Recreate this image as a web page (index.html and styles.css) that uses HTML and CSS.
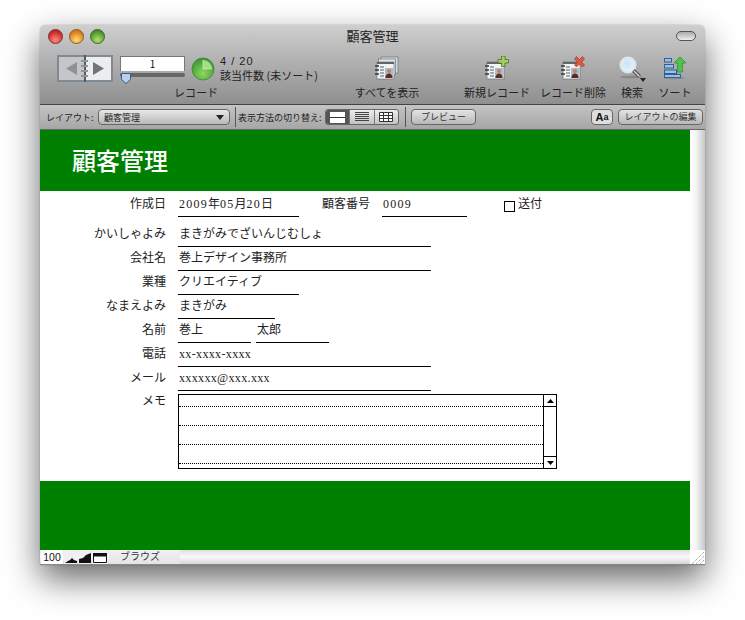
FILE: index.html
```html
<!DOCTYPE html>
<html lang="ja">
<head>
    <meta charset="UTF-8">
    <title>顧客管理</title>
    <link rel="stylesheet" href="styles.css">
</head>
<body>

<svg class="defs" width="0" height="0">
    <defs>
        <radialGradient id="redBall" cx="50%" cy="75%" r="65%">
            <stop offset="0" stop-color="#ff8a80"/><stop offset="1" stop-color="#c81e1e"/>
        </radialGradient>
        <radialGradient id="amberBall" cx="50%" cy="75%" r="65%">
            <stop offset="0" stop-color="#ffe070"/><stop offset="1" stop-color="#d9711a"/>
        </radialGradient>
        <radialGradient id="greenBall" cx="50%" cy="75%" r="65%">
            <stop offset="0" stop-color="#b5e070"/><stop offset="1" stop-color="#3f8f25"/>
        </radialGradient>
        <radialGradient id="pieBall" cx="50%" cy="70%" r="65%">
            <stop offset="0" stop-color="#8fd860"/><stop offset="1" stop-color="#3a9a30"/>
        </radialGradient>
        <radialGradient id="lens" cx="45%" cy="40%" r="60%">
            <stop offset="0" stop-color="#c4e4f8"/><stop offset="1" stop-color="#e9f3f8"/>
        </radialGradient>
        <symbol id="card" viewBox="0 0 20 20">
            <rect x="2" y="2" width="17" height="17" fill="#f1f3f3" stroke="#6c7278" stroke-width=".7"/>
            <rect x="2" y="2" width="17" height="2" fill="#5f666c"/>
            <path d="M0 6h4M0 10h4M0 14h4" stroke="#33383c" stroke-width="1.3"/>
            <path d="M5 7h4M5 10h4M5 13h4M5 16h4" stroke="#8b949b" stroke-width="1.4"/>
            <rect x="10" y="8" width="8" height="10" fill="#a9bccb"/>
            <circle cx="14" cy="11" r="2" fill="#c9805f"/>
            <path d="M10.500 18c0-3 1.500-4.500 3.500-4.500s3.500 1.500 3.500 4.500z" fill="#5b2b20"/>
        </symbol>
    </defs>
</svg>

<div class="window">
    <div class="titlebar">
        <div class="lights">
            <svg width="15" height="15"><circle cx="7.500" cy="7.500" r="7" fill="url(#redBall)" stroke="#7c3a3a"/></svg>
            <svg width="15" height="15"><circle cx="7.500" cy="7.500" r="7" fill="url(#amberBall)" stroke="#86602a"/></svg>
            <svg width="15" height="15"><circle cx="7.500" cy="7.500" r="7" fill="url(#greenBall)" stroke="#3d6b30"/></svg>
        </div>
        <div class="window-title">顧客管理</div>
        <div class="pill"></div>
    </div>

    <div class="toolbar">
        <div class="record-group">
            <div class="record-controls">
                <svg class="book" width="56" height="28" viewBox="0 0 56 28">
                    <rect x="0" y="0" width="56" height="27" fill="#7f8a93"/>
                    <rect x="2" y="2" width="26" height="23" fill="#c4c6c8"/>
                    <rect x="28" y="2" width="26" height="23" fill="#eceded"/>
                    <rect x="27" y="0" width="2" height="27" fill="#4e5a64"/>
                    <path d="M24 6h7M24 11h7M24 16h7M24 21h7" stroke="#555d63" stroke-width="2"/>
                    <path d="M24 6h7M24 11h7M24 16h7M24 21h7" stroke="#e8e8e8" stroke-width=".8"/>
                    <path d="M20 7v13l-11-6.500z" fill="#8f9295"/>
                    <path d="M36 7v13l11-6.500z" fill="#6e747a"/>
                </svg>
                <div class="slider-box">
                    <div class="record-input">1</div>
                    <div class="slider">
                        <svg class="thumb" width="10" height="11" viewBox="0 0 10 11"><path d="M.500.500h9v6l-4.500 4-4.500-4z" fill="#bcd0ea" stroke="#2f5d9c"/></svg>
                    </div>
                </div>
                <svg class="pie" width="24" height="24" viewBox="0 0 24 24">
                    <circle cx="12" cy="12" r="11" fill="url(#pieBall)" stroke="#4b7b45" stroke-width=".8"/>
                    <path d="M12 12V3a9 9 0 0 1 9 9z" fill="#a9dc88"/>
                    <path d="M12 12V3M12 12h9" stroke="#d9efc8" stroke-width=".7"/>
                </svg>
                <div class="record-count">
                    <div class="count-number">4 / 20</div>
                    <div>該当件数 (未ソート)</div>
                </div>
            </div>
            <div class="tool-label">レコード</div>
        </div>

        <div class="tool tool-all">
            <svg class="tool-icon" width="26" height="24" viewBox="0 0 26 24">
                <rect x="7" y="1" width="17" height="16" fill="#d5d9db" stroke="#6c7278" stroke-width=".7"/>
                <rect x="4.500" y="3" width="17" height="16" fill="#e4e7e8" stroke="#6c7278" stroke-width=".7"/>
                <use href="#card" x="1" y="4" width="20" height="20"/>
            </svg>
            <div class="tool-label">すべてを表示</div>
        </div>
        <div class="tool tool-new">
            <svg class="tool-icon" width="24" height="24" viewBox="0 0 24 24">
                <use href="#card" x="0" y="4" width="20" height="20"/>
                <path d="M13 3.500h3.500V0h3.500v3.500h3.500v3.500H20v3.500h-3.500V7H13z" fill="#a4cf5e" stroke="#47722d" stroke-width=".8"/>
            </svg>
            <div class="tool-label">新規レコード</div>
        </div>
        <div class="tool tool-delete">
            <svg class="tool-icon" width="24" height="24" viewBox="0 0 24 24">
                <use href="#card" x="0" y="4" width="20" height="20"/>
                <path d="M13.500 3l2-2.500 3 3 3-3 2 2.500-3 3 3 3-2 2-3-3-3 3-2-2 3-3z" fill="#e2573f" stroke="#8c3226" stroke-width=".6"/>
            </svg>
            <div class="tool-label">レコード削除</div>
        </div>
        <div class="tool tool-find">
            <svg class="tool-icon" width="28" height="26" viewBox="0 0 28 26">
                <ellipse cx="13" cy="21" rx="11" ry="1.500" fill="#777" opacity=".6"/>
                <circle cx="10" cy="9" r="7.500" fill="url(#lens)" stroke="#dfe6ea" stroke-width="2"/>
                <path d="M15.500 14.500l6 6" stroke="#444" stroke-width="3.500"/>
                <path d="M16 15l5.500 5.500" stroke="#ddd" stroke-width="1.500"/>
                <path d="M22 22h6l-3 4z" fill="#222"/>
            </svg>
            <div class="tool-label">検索</div>
        </div>
        <div class="tool tool-sort">
            <svg class="tool-icon" width="24" height="24" viewBox="0 0 24 24">
                <ellipse cx="11" cy="22" rx="11" ry="1.500" fill="#777" opacity=".5"/>
                <g fill="#9dc0e0" stroke="#2f5f95" stroke-width="1">
                    <rect x="1.500" y="2.500" width="7" height="3.500"/>
                    <rect x="1.500" y="8.500" width="9" height="3.500"/>
                    <rect x="1.500" y="14" width="12" height="3.500"/>
                    <rect x="1.500" y="18.500" width="16" height="3"/>
                </g>
                <path d="M17 1l6 6h-3.500v9h-5V7H11z" fill="#4fc24a" stroke="#2f8a33" stroke-width=".7"/>
            </svg>
            <div class="tool-label">ソート</div>
        </div>
    </div>

    <div class="layoutbar">
        <span class="bar-text layout-text">レイアウト:</span>
        <div class="select">
            <span>顧客管理</span>
            <svg width="8" height="5"><path d="M0 0h8l-4 5z" fill="#222"/></svg>
        </div>
        <div class="bar-sep"></div>
        <span class="bar-text view-text">表示方法の切り替え:</span>
        <div class="segments">
            <div class="segment segment-on">
                <svg width="15" height="11"><path d="M0 0h15v11H0z" fill="#fff"/><path d="M0 5.500h15" stroke="#333"/></svg>
            </div>
            <div class="segment">
                <svg width="14" height="10"><path d="M0 .500h14M0 2.500h14M0 4.500h14M0 6.500h14M0 8.500h14" stroke="#444"/></svg>
            </div>
            <div class="segment">
                <svg width="14" height="10"><path d="M.500.500h13v9h-13zM.500 3.500h13M.500 6.500h13M4.500 .500v9M9.500 .500v9" fill="#fff" stroke="#333"/></svg>
            </div>
        </div>
        <div class="bar-sep bar-sep-wide"></div>
        <button class="bar-button preview">プレビュー</button>
        <button class="bar-button font-button">A<sup>a</sup></button>
        <button class="bar-button edit-layout">レイアウトの編集</button>
    </div>

    <div class="body-row">
        <div class="content">
            <div class="green-head">顧客管理</div>
            <div class="form">
                <div class="row row-first">
                    <div class="label">作成日</div>
                    <div class="field w-date"><span class="digits">2009</span>年<span class="digits">05</span>月<span class="digits">20</span>日</div>
                    <div class="label label-number">顧客番号</div>
                    <div class="field w-number"><span class="digits">0009</span></div>
                    <div class="send">
                        <span class="checkbox"></span>送付
                    </div>
                </div>
                <div class="row">
                    <div class="label">かいしゃよみ</div>
                    <div class="field w-long">まきがみでざいんじむしょ</div>
                </div>
                <div class="row">
                    <div class="label">会社名</div>
                    <div class="field w-long">巻上デザイン事務所</div>
                </div>
                <div class="row">
                    <div class="label">業種</div>
                    <div class="field w-date">クリエイティブ</div>
                </div>
                <div class="row">
                    <div class="label">なまえよみ</div>
                    <div class="field w-kana">まきがみ</div>
                </div>
                <div class="row">
                    <div class="label">名前</div>
                    <div class="field w-name">巻上</div>
                    <div class="field w-name name-second">太郎</div>
                </div>
                <div class="row">
                    <div class="label">電話</div>
                    <div class="field w-long latin">xx-xxxx-xxxx</div>
                </div>
                <div class="row">
                    <div class="label">メール</div>
                    <div class="field w-long latin">xxxxxx@xxx.xxx</div>
                </div>
                <div class="memo-row">
                    <div class="label">メモ</div>
                    <div class="memo">
                        <div class="memo-lines">
                            <div class="memo-line"></div>
                            <div class="memo-line"></div>
                            <div class="memo-line"></div>
                            <div class="memo-line"></div>
                        </div>
                        <div class="memo-scroll">
                            <div class="scroll-btn"><svg width="7" height="4"><path d="M3.500 0L7 4H0z"/></svg></div>
                            <div class="scroll-track"></div>
                            <div class="scroll-btn"><svg width="7" height="4"><path d="M0 0h7L3.500 4z"/></svg></div>
                        </div>
                    </div>
                </div>
            </div>
            <div class="green-foot"></div>
        </div>
        <div class="scrollbar"></div>
    </div>

    <div class="statusbar">
        <div class="zoom-value">100</div>
        <div class="status-cell">
            <svg width="12" height="5"><path d="M0 5l3-2 2-1 2-2 2 2 3 1v2z" fill="#111"/></svg>
        </div>
        <div class="status-cell">
            <svg width="12" height="10"><path d="M0 10V6l4-1 3-3 5-2v10z" fill="#111"/></svg>
        </div>
        <div class="status-cell">
            <svg width="14" height="10"><path d="M.500.500h13v9H.500z" fill="#fff" stroke="#111"/><path d="M0 0h14v3.500H0z" fill="#111"/></svg>
        </div>
        <div class="mode">ブラウズ</div>
        <div class="status-rest"></div>
        <svg class="grip" width="15" height="14"><path d="M14 2L2 14M14 6L6 14M14 10l-4 4" stroke="#888" stroke-dasharray="1 1" fill="none"/></svg>
    </div>
</div>

</body>
</html>
```

FILE: styles.css
```css
html {
    height: 100%;
    background: #fff;
}

body {
    margin: 0;
    min-height: 100%;
    padding: 25px 40px 0;
    box-sizing: border-box;
    background: #fff;
    font-family: "Noto Sans CJK JP", "Liberation Sans", sans-serif;
    color: #222;
}

.defs {
    position: absolute;
}

.window {
    width: 665px;
    height: 540px;
    display: flex;
    flex-direction: column;
    border-radius: 6px 6px 0 0;
    box-shadow: 0 14px 34px rgba(0, 0, 0, 0.6), 0 0 1px rgba(0, 0, 0, 0.6);
    background: #fff;
}

/* title bar */
.titlebar {
    height: 22px;
    flex: none;
    display: flex;
    align-items: center;
    position: relative;
    border-radius: 6px 6px 0 0;
    background: linear-gradient(#cfcfcf, #bcbcbc);
}

.lights {
    display: flex;
    gap: 6px;
    padding-left: 8px;
}

.lights svg {
    display: block;
}

.window-title {
    position: absolute;
    left: 0;
    right: 0;
    text-align: center;
    font-size: 13px;
    line-height: 22px;
    color: #222;
}

.pill {
    position: absolute;
    right: 9px;
    top: 6px;
    width: 18px;
    height: 8px;
    border: 1px solid #555;
    border-radius: 5px;
    background: linear-gradient(#aaa, #eee);
}

/* toolbar */
.toolbar {
    height: 58px;
    flex: none;
    display: flex;
    padding-left: 17px;
    box-sizing: border-box;
    background: linear-gradient(#bcbcbc, #8f8f8f);
    border-bottom: 1px solid #444;
}

.tool-label {
    font-size: 11px;
    line-height: 14px;
    color: #222;
    text-align: center;
    white-space: nowrap;
}

.record-group {
    width: 278px;
    flex: none;
}

.record-controls {
    display: flex;
    height: 38px;
    padding-top: 8px;
    box-sizing: border-box;
}

.book {
    display: block;
    flex: none;
}

.slider-box {
    width: 65px;
    margin: 1px 0 0 7px;
    flex: none;
}

.record-input {
    height: 15px;
    background: #fff;
    border: 1px solid #777;
    border-bottom: 0;
    box-sizing: border-box;
    font-size: 10px;
    line-height: 13px;
    text-align: center;
    color: #111;
}

.slider {
    height: 4px;
    margin-top: 2px;
    border-radius: 2px;
    background: #666;
    position: relative;
}

.thumb {
    position: absolute;
    left: 1px;
    top: 0;
}

.pie {
    margin: 2px 0 0 6px;
    flex: none;
}

.record-count {
    margin: -1px 0 0 5px;
    font-size: 11px;
    line-height: 14px;
    color: #222;
    white-space: nowrap;
}

.count-number {
    font-family: "Liberation Sans", sans-serif;
    letter-spacing: 1px;
}

.tool {
    flex: none;
    display: flex;
    flex-direction: column;
    align-items: center;
    justify-content: flex-end;
    height: 52px;
}

.tool-icon {
    display: block;
    margin-bottom: 5px;
}

.tool-all {
    width: 104px;
}

.tool-new {
    width: 76px;
    margin-left: 20px;
}

.tool-delete {
    width: 76px;
}

.tool-find {
    width: 42px;
}

.tool-find .tool-icon {
    margin-bottom: 3px;
}

.tool-sort {
    width: 44px;
}

/* layout bar */
.layoutbar {
    height: 25px;
    flex: none;
    display: flex;
    align-items: center;
    padding-left: 6px;
    box-sizing: border-box;
    background: linear-gradient(#c4c4c4, #a6a6a6);
    border-bottom: 1px solid #666;
}

.bar-text {
    font-size: 9px;
    color: #222;
    white-space: nowrap;
}

.layout-text {
    width: 52px;
}

.view-text {
    width: 85px;
}

.select {
    width: 132px;
    height: 16px;
    box-sizing: border-box;
    display: flex;
    align-items: center;
    justify-content: space-between;
    padding: 0 5px 0 5px;
    font-size: 9px;
    border: 1px solid #666;
    border-radius: 4px;
    background: linear-gradient(#e8e8e8, #b8b8b8);
}

.bar-sep {
    width: 1px;
    height: 20px;
    margin: 0 2px 0 5px;
    background: #555;
}

.bar-sep-wide {
    margin: 0 5px 0 6px;
}

.segments {
    display: flex;
    margin-left: 2px;
    height: 16px;
    width: 74px;
    border: 1px solid #666;
    box-sizing: border-box;
    border-radius: 3px;
    overflow: hidden;
    background: linear-gradient(#eee, #c2c2c2);
}

.segment {
    flex: 1;
    display: flex;
    align-items: center;
    justify-content: center;
    border-right: 1px solid #777;
}

.segment:last-child {
    border-right: 0;
}

.segment-on {
    background: #555;
}

.segment svg {
    display: block;
}

.bar-button {
    height: 16px;
    padding: 0;
    font-family: inherit;
    font-size: 9px;
    line-height: 14px;
    color: #333;
    border: 1px solid #666;
    border-radius: 4px;
    background: linear-gradient(#e4e4e4, #b8b8b8);
}

.preview {
    width: 65px;
}

.font-button {
    width: 22px;
    margin-left: 115px;
    font-family: "Liberation Sans", sans-serif;
    font-size: 11px;
    font-weight: bold;
    color: #111;
    background: #ddd;
}

.font-button sup {
    font-size: 9px;
    line-height: 0;
    vertical-align: 1px;
}

.edit-layout {
    width: 85px;
    margin-left: 5px;
}

/* page */
.body-row {
    flex: 1;
    display: flex;
    min-height: 0;
}

.content {
    width: 650px;
    display: flex;
    flex-direction: column;
}

.green-head {
    height: 61px;
    flex: none;
    background: #008000;
    color: #fff;
    font-size: 24px;
    font-weight: 500;
    line-height: 59px;
    padding-bottom: 2px;
    box-sizing: border-box;
    padding-left: 32px;
}

.green-foot {
    height: 69px;
    flex: none;
    background: #008000;
}

.form {
    flex: 1;
    padding-top: 2px;
    box-sizing: border-box;
    font-family: "Liberation Serif", "Noto Sans CJK JP", serif;
    font-size: 12px;
    color: #222;
}

.row {
    display: flex;
    height: 24px;
    line-height: 22px;
}

.row-first {
    margin-bottom: 6px;
}

.label {
    width: 126px;
    flex: none;
    text-align: right;
    margin-right: 12px;
}

.field {
    box-sizing: border-box;
    height: 24px;
    padding-left: 1px;
    border-bottom: 1px solid #000;
    white-space: nowrap;
}

.digits {
    letter-spacing: 1.25px;
}

.latin {
    letter-spacing: 0.35px;
}

.w-date {
    width: 121px;
}

.w-long {
    width: 253px;
}

.w-kana {
    width: 97px;
}

.w-name {
    width: 73px;
}

.name-second {
    margin-left: 5px;
}

.label-number {
    width: 71px;
}

.w-number {
    width: 85px;
}

.send {
    display: flex;
    align-items: flex-start;
    margin-left: 37px;
}

.checkbox {
    width: 9px;
    height: 9px;
    margin: 8px 3px 0 0;
    border: 1px solid #000;
    background: #fff;
}

.memo-row {
    display: flex;
    margin-top: 3px;
}

.memo-row .label {
    line-height: 14px;
}

.memo {
    width: 379px;
    height: 75px;
    box-sizing: border-box;
    display: flex;
    border: 1px solid #000;
}

.memo-lines {
    flex: 1;
}

.memo-line {
    height: 18px;
    border-bottom: 1px dotted #000;
}

.memo-line:first-child {
    height: 11px;
}

.memo-scroll {
    width: 12px;
    display: flex;
    flex-direction: column;
    border-left: 1px solid #000;
}

.scroll-btn {
    height: 11px;
    display: flex;
    align-items: center;
    justify-content: center;
}

.scroll-btn svg {
    display: block;
}

.scroll-track {
    flex: 1;
    border-top: 1px solid #000;
    border-bottom: 1px solid #000;
}

.scrollbar {
    width: 15px;
    background: linear-gradient(90deg, #fff, #f4f4f4 40%, #c8c8c8);
}

/* status bar */
.statusbar {
    height: 15px;
    flex: none;
    display: flex;
    box-sizing: border-box;
    border-bottom: 1px solid #888;
    background: linear-gradient(#e0e0e0, #fafafa 50%, #d4d4d4);
}

.zoom-value {
    width: 22px;
    margin-left: 1px;
    box-sizing: border-box;
    font-family: "Liberation Sans", sans-serif;
    font-size: 10.5px;
    line-height: 15px;
    text-align: center;
    color: #111;
    background: #fff;
}

.status-cell {
    width: 13px;
    flex: none;
    margin-left: 1px;
    display: flex;
    align-items: flex-end;
    justify-content: center;
    background: #f0f0f0;
    padding-bottom: 1px;
    box-sizing: border-box;
}

.status-cell:nth-child(4) {
    width: 16px;
}

.status-cell svg {
    display: block;
}

.mode {
    width: 71px;
    margin-left: 1px;
    flex: none;
    padding-left: 11px;
    box-sizing: border-box;
    font-size: 10px;
    line-height: 12px;
    color: #333;
    background: linear-gradient(#f2f2f2, #e4e4e4);
}

.status-rest {
    flex: 1;
}

.grip {
    display: block;
    flex: none;
    background: #fff;
}
```
